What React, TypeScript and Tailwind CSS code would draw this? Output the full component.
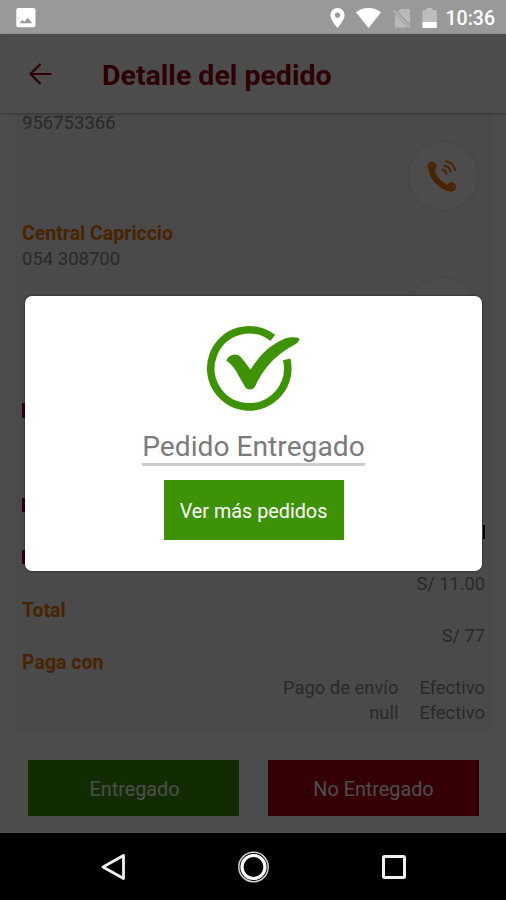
import type { ReactNode } from "react";

const PAYMENTS = [
  { label: "Pago de envío", method: "Efectivo" },
  { label: "null", method: "Efectivo" },
];

function StatusBar() {
  return (
    <div className="flex h-[34px] shrink-0 items-center bg-[#999999] pl-4 pr-[11px] pt-px text-white">
      <svg className="h-5 w-5" viewBox="0 0 20 20">
        <rect x="0.3" y="0" width="19.2" height="19.2" rx="2" fill="#fff" />
        <path d="M3.500 15.300 6.400 11.800l1.900 2 3.500-4 4.400 5.500Z" fill="#999" />
      </svg>
      <div className="ml-auto flex items-center">
        <svg className="h-5 w-[15px]" viewBox="0 0 15 20">
          <path fillRule="evenodd" d="M7.5 0A7.1 7.1 0 0 0 .4 7.1C.4 12.3 7.5 20 7.5 20s7.1-7.7 7.1-12.9A7.1 7.1 0 0 0 7.5 0Zm0 4.5a2.6 2.6 0 1 1 0 5.2 2.6 2.6 0 0 1 0-5.2Z" fill="#fff" />
        </svg>
        <svg className="ml-[11px] h-5 w-[25px]" viewBox="0 0 25 20">
          <path d="M0 4.2C3.4 1.5 7.7 0 12.5 0S21.6 1.5 25 4.2L12.5 20Z" fill="#fff" />
        </svg>
        <svg className="ml-3 h-5 w-[18px]" viewBox="0 0 18 20">
          <path d="M8 .8h7.500a1.600 1.600 0 0 1 1.600 1.600v14L4.800 3.800ZM1.800 5.700 15 19.500H3.200a1.500 1.500 0 0 1-1.400-1.500Z" fill="#b9b9b9" />
          <path d="m.7 2.500 16.500 17" stroke="#b9b9b9" strokeWidth="1.500" />
        </svg>
        <svg className="ml-[11px] h-5 w-[15px]" viewBox="0 0 15 20">
          <path d="M4.500 0h6v2H14a.8.8 0 0 1 .8.8V14H.4V2.800A.8.8 0 0 1 1.200 2h3.300Z" fill="#bdbdbd" />
          <path d="M.4 14h14.400v5a1 1 0 0 1-1 1H1.400a1 1 0 0 1-1-1Z" fill="#fff" />
        </svg>
        <span className="ml-[9px] pt-0.5 text-[19.500px] font-medium leading-none">10:36</span>
      </div>
    </div>
  );
}

function CallButton() {
  return (
    <div className="mr-2 flex h-[68px] w-[68px] items-center justify-center rounded-full bg-white shadow-[0_0_5px_rgba(0,0,0,0.12)]">
      <svg className="h-8 w-8" viewBox="0 0 32 32" fill="none" stroke="#f57a08" strokeLinecap="round">
        <path d="M4.500 9.500C5.500 15 8.500 19.500 12 22.500c3.500 3.200 6.500 5.300 10.500 5.800" strokeWidth="6" />
        <circle cx="5" cy="6.500" r="3.900" fill="#f57a08" strokeWidth="1.500" />
        <circle cx="24.500" cy="27" r="3.900" fill="#f57a08" strokeWidth="1.500" />
        <path d="M3.200 5.800c.6-1.300 2.600-1.600 3.500-.4M26.800 25.300c.8 1.200.3 2.800-1 3.400" stroke="#fff" strokeOpacity="0.700" strokeWidth="1" />
        <path d="M19 1.300c4.800.8 8.300 4.500 9.200 9M17.300 5.500c3.200.6 5.700 3.300 6.300 6.300M15.500 9.500c2 .5 3.600 2.200 4.100 4.300" strokeWidth="2" />
      </svg>
    </div>
  );
}

function Label({ children }: { children: ReactNode }) {
  return <div className="h-[26px] pt-px text-[19.500px] font-bold text-[#f57a08]">{children}</div>;
}

function OrderDetail() {
  return (
    <div className="flex-1">
      <div className="mx-[15px] h-[619px] w-[478px] bg-[#f7f7f7] pl-[7px] pr-2 text-[18.500px] leading-[26px] text-[#8c8c8c]">
        <div className="h-[23px] leading-[20px]">956753366</div>
        <div className="flex h-[84px] justify-end pt-[6px]">
          <CallButton />
        </div>
        <Label>Central Capriccio</Label>
        <div>054 308700</div>
        <div className="flex justify-end pt-[6px]">
          <CallButton />
        </div>
        <div className="mt-[57px] h-[15px] w-1 bg-[#a00010]" />
        <div className="mt-[80px] h-3.5 w-1 bg-[#a00010]" />
        <div className="mt-[13px] ml-auto h-3.5 w-0.5 bg-black" />
        <div className="mt-[11px] h-3.5 w-1 bg-[#a00010]" />
        <div className="mt-[7px] text-right text-[18.200px]">S/ 11.00</div>
        <Label>Total</Label>
        <div className="text-right text-[18.200px]">S/ 77</div>
        <Label>Paga con</Label>
        {PAYMENTS.map((payment) => (
          <div key={payment.label} className="flex justify-end gap-[21px] text-[18.400px] leading-[25px]">
            <span>{payment.label}</span>
            <span>{payment.method}</span>
          </div>
        ))}
      </div>
      <div className="mt-7 flex gap-[29px] pl-7 text-[19.800px] text-white">
        <button className="h-14 w-[211px] bg-[#3d9305] pl-0.5 pt-[3px]">Entregado</button>
        <button className="h-14 w-[211px] bg-[#b00014] pt-[3px]">No Entregado</button>
      </div>
    </div>
  );
}

function DeliveredDialog() {
  return (
    <div className="absolute inset-0 bg-black/70">
      <div className="ml-[25px] mt-[262px] flex h-[275px] w-[457px] flex-col items-center rounded-[7px] bg-white shadow-[0_0_2px_rgba(0,0,0,0.8)]">
        <svg className="mt-6 h-[100px] w-[108px] shrink-0" viewBox="0 0 108 100">
          <path d="M72.300 17.400A38.500 38.500 0 1 0 86.200 38.900" transform="translate(0.500 0.500)" fill="none" stroke="#3d9305" strokeWidth="7.700" />
          <path d="M98.600 17.500C93 16.300 87.500 16.700 83 18.700 69.500 24.500 59 34.500 50 49.300 46 44 43.700 40.500 40 36.300c-2.300-2.500-6-3-9-1.600-2.500 1.100-4.600 3.300-5 5.500 3.700 2.500 6.500 5.500 9.500 10.300L44 65.500c1.500 2.600 3 3.500 5.500 3.500 2.300 0 4-1 5.200-3.300C62 49.500 73 37 87.500 28c4.500-2.800 9.500-4.500 11.100-8.200Z" transform="translate(0.500 0.500)" fill="#3d9305" />
        </svg>
        <div className="mt-[9px] flex h-[37px] w-[223px] items-center justify-center whitespace-nowrap border-b-[3px] border-[#cccccc] pt-0.5 text-[28.200px] leading-none text-[#7b7b7b]">
          Pedido Entregado
        </div>
        <button className="mt-3.5 h-[60px] w-[180px] bg-[#3d9305] pt-[3px] text-[19.800px] text-white">Ver más pedidos</button>
      </div>
    </div>
  );
}

function NavBar() {
  return (
    <div className="flex h-[67px] shrink-0 items-center bg-black pl-[101px]">
      <svg className="h-7 w-6" viewBox="0 0 24 28">
        <path d="M22.500 2.500v23L2 14Z" fill="none" stroke="#f2f2f2" strokeWidth="2.800" strokeLinejoin="round" />
      </svg>
      <svg className="ml-28 h-8 w-8" viewBox="0 0 32 32" fill="none">
        <circle cx="16.500" cy="16" r="14.700" stroke="#d0d0d0" strokeWidth="1.500" />
        <circle cx="16.500" cy="16" r="11.500" stroke="#fff" strokeWidth="3.200" />
      </svg>
      <svg className="ml-28 h-[26px] w-[26px]" viewBox="0 0 26 26">
        <rect x="2.500" y="2.500" width="21" height="21" rx="1" fill="none" stroke="#f2f2f2" strokeWidth="3" />
      </svg>
    </div>
  );
}

export default function App() {
  return (
    <div className="flex h-[900px] w-[506px] flex-col overflow-hidden bg-white font-['Roboto',sans-serif]">
      <StatusBar />
      <div className="relative flex h-[799px] flex-col">
        <header className="z-0 flex h-[79px] shrink-0 items-center bg-white pl-7 shadow-[0_1px_3px_rgba(0,0,0,0.3)]">
          <svg className="h-6 w-6" viewBox="0 0 24 24" fill="none" stroke="#96000c" strokeWidth="2.200">
            <path d="M12.500 2 2.500 12l10 10M2.500 12h21" />
          </svg>
          <h1 className="ml-[50px] pt-1.5 text-[28.500px] font-bold leading-none text-[#96000c]">Detalle del pedido</h1>
        </header>
        <OrderDetail />
        <DeliveredDialog />
      </div>
      <NavBar />
    </div>
  );
}
